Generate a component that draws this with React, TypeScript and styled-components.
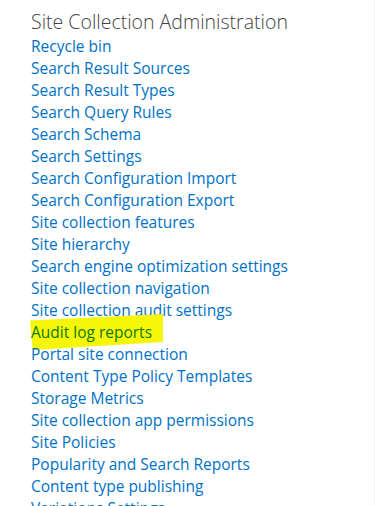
import React from "react";
import styled, { createGlobalStyle } from "styled-components";

const GlobalStyle = createGlobalStyle`
  html, body {
    margin: 0;
    padding: 0;
    background: #ffffff;
  }
  body {
    font-family: "Open Sans", "Noto Sans", "Liberation Sans", sans-serif;
    overflow: hidden;
  }
`;

const Page = styled.div`
  width: 375px;
  height: 506px;
  box-sizing: border-box;
  padding: 8px 0 0 31px;
  border-right: 1px solid #f3f3f3;
  overflow: hidden;
`;

const Heading = styled.h2`
  margin: 0;
  font-size: 19.5px;
  font-weight: 300;
  line-height: 27px;
  color: #444444;
  white-space: nowrap;
`;

const LinkList = styled.ul`
  list-style: none;
  margin: 0;
  padding: 0;
  display: flex;
  flex-direction: column;
`;

const Item = styled.li`
  height: 22px;
  line-height: 22px;
  white-space: nowrap;
`;

const Link = styled.a<{ $marked?: boolean }>`
  position: relative;
  font-size: 15.5px;
  color: ${({ $marked }) => ($marked ? "#0c7a06" : "#0072c6")};
  text-decoration: none;
  cursor: pointer;
  z-index: 0;

  ${({ $marked }) =>
    $marked &&
    `
    &::before {
      content: "";
      position: absolute;
      left: -1px;
      right: -11px;
      top: -7px;
      bottom: -7px;
      background: #f6f60a;
      clip-path: polygon(0 18%, 100% 0, 100% 78%, 2% 100%);
      z-index: -1;
    }
  `}
`;

const links = [
  "Recycle bin",
  "Search Result Sources",
  "Search Result Types",
  "Search Query Rules",
  "Search Schema",
  "Search Settings",
  "Search Configuration Import",
  "Search Configuration Export",
  "Site collection features",
  "Site hierarchy",
  "Search engine optimization settings",
  "Site collection navigation",
  "Site collection audit settings",
  "Audit log reports",
  "Portal site connection",
  "Content Type Policy Templates",
  "Storage Metrics",
  "Site collection app permissions",
  "Site Policies",
  "Popularity and Search Reports",
  "Content type publishing",
  "Variations Settings",
];

export default function App() {
  return (
    <>
      <GlobalStyle />
      <Page>
        <Heading>Site Collection Administration</Heading>
        <LinkList>
          {links.map((label) => (
            <Item key={label}>
              <Link $marked={label === "Audit log reports"}>{label}</Link>
            </Item>
          ))}
        </LinkList>
      </Page>
    </>
  );
}
